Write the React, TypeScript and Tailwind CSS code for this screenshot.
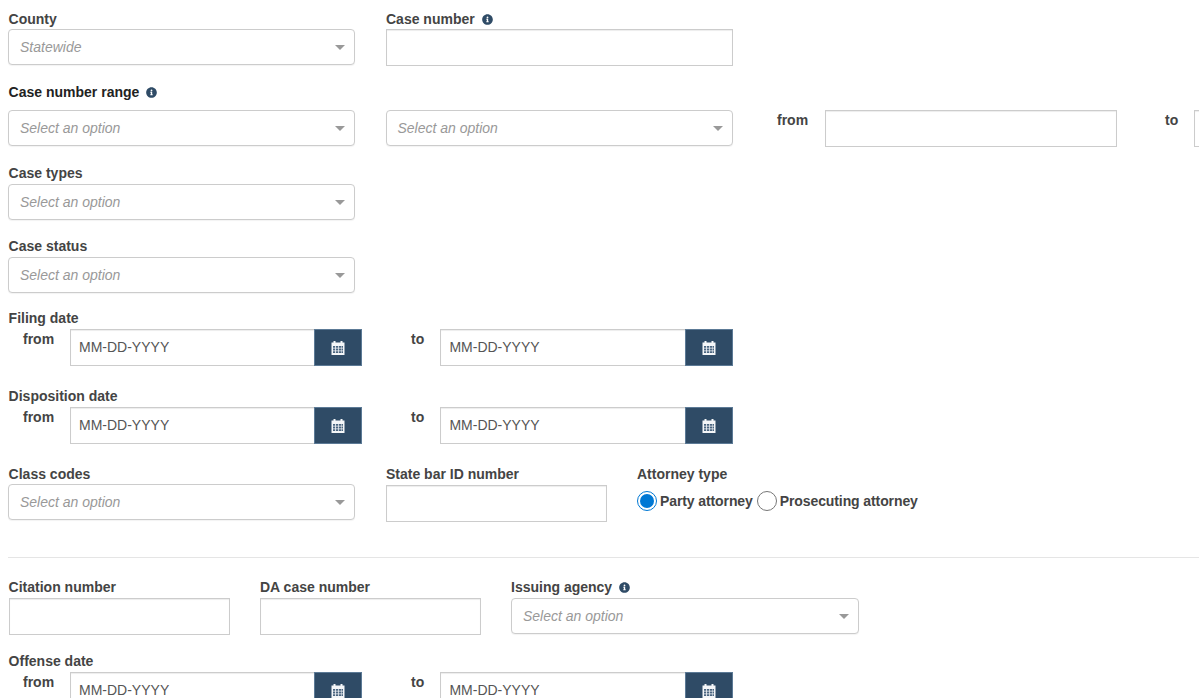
import React from 'react';
import { FaInfoCircle } from 'react-icons/fa';

function Label({ text, info, dark, first }: { text: string, info?: boolean, dark?: boolean, first?: boolean }): React.ReactElement {
  return (
    <div className={`flex items-center h-5 text-sm font-bold leading-5 ${first ? 'pl-[0.6px]' : ''} ${dark ? 'text-[#222]' : 'text-[#444]'}`}>
      {text}
      {info && <FaInfoCircle className="ml-[7px] w-[11px] h-[11px] text-[#2f4b66]" />}
    </div>
  )
}

function Select({ text = 'Select an option', className = 'w-[347px]' }: { text?: string, className?: string }): React.ReactElement {
  return (
    <div className={`relative shrink-0 flex items-center h-9 pl-[11px] pb-px bg-white border border-[#ccc] rounded shadow-[0_1px_1px_rgba(0,0,0,0.05)] text-sm italic text-[#999] ${className}`}>
      {text}
      <span className="absolute right-[9px] top-[15px] w-0 h-0 border-x-[5px] border-x-transparent border-t-[5px] border-t-[#999]" />
    </div>
  )
}

function TextInput({ className }: { className: string }): React.ReactElement {
  return <input className={`block shrink-0 h-[37px] bg-white border border-[#ccc] shadow-[inset_0_1px_1px_rgba(0,0,0,0.075)] ${className}`} />
}

function CalendarIcon(): React.ReactElement {
  return (
    <svg width="14" height="15" viewBox="0 0 14 15">
      <path fill="#f4f6f8" d="M0.500 2.500h2V1h2v1.500h5V1h2v1.500h2V15H0.500z" />
      <path fill="#4a6580" d="M2 6h2.200v1.800H2zM5 6h2.200v1.800H5zM7.900 6h2.200v1.800H7.900zM10.600 6H12v1.800h-1.400zM2 8.600h2.200v1.800H2zM5 8.600h2.200v1.800H5zM7.900 8.600h2.200v1.800H7.900zM10.600 8.600H12v1.800h-1.400zM2 11.200h2.200V13H2zM5 11.200h2.200V13H5zM7.900 11.200h2.200V13H7.900zM10.600 11.200H12V13h-1.400z" />
    </svg>
  )
}

function DateInput(): React.ReactElement {
  return (
    <div className="flex w-[292.4px] h-[37px]">
      <input
        placeholder="MM-DD-YYYY"
        className="flex-1 min-w-0 h-full pl-2 pb-px bg-white border border-[#ccc] border-r-0 shadow-[inset_0_1px_1px_rgba(0,0,0,0.075)] text-sm font-normal text-[#555] placeholder:text-[#555]"
      />
      <div className="flex items-center justify-center w-12 h-full bg-[#2f4b66] border border-[#5c7a96]">
        <CalendarIcon />
      </div>
    </div>
  )
}

function DateRange(): React.ReactElement {
  return (
    <div className="flex items-start text-sm font-bold text-[#444]">
      <div className="w-[62px] pl-[15px] leading-5">from</div>
      <DateInput />
      <div className="w-[78px] pl-[48.6px] leading-5">to</div>
      <DateInput />
    </div>
  )
}

function Radio({ text, checked }: { text: string, checked?: boolean }): React.ReactElement {
  return (
    <div className="flex items-center">
      {checked ? (
        <span className="flex items-center justify-center w-5 h-5 rounded-full border border-[#0078d4] bg-white">
          <span className="w-[14px] h-[14px] rounded-full bg-[#0078d4]" />
        </span>
      ) : (
        <span className="w-5 h-5 rounded-full border border-[#777] bg-white" />
      )}
      <span className="ml-[3px] text-sm font-bold tracking-[-0.1px] text-[#444]">{text}</span>
    </div>
  )
}

export default function App(): React.ReactElement {
  return (
    <div className="w-[1199px] h-[698px] overflow-hidden bg-white pl-2 pt-[9px] font-['Liberation_Sans',Arial,sans-serif]">
      <div className="flex gap-[31px]">
        <div>
          <Label text="County" first />
          <Select text="Statewide" />
        </div>
        <div>
          <Label text="Case number" info />
          <TextInput className="w-[347px]" />
        </div>
      </div>

      <div className="mt-4">
        <Label text="Case number range" info dark first />
        <div className="flex items-start mt-2">
          <Select />
          <Select className="w-[347.5px] ml-[30.5px]" />
          <div className="shrink-0 ml-[44px] w-12 text-sm font-bold leading-5 text-[#444]">from</div>
          <TextInput className="w-[292px]" />
          <div className="shrink-0 ml-[48px] w-[29px] text-sm font-bold leading-5 text-[#444]">to</div>
          <TextInput className="w-[292px]" />
        </div>
      </div>

      <div className="mt-4">
        <Label text="Case types" first />
        <div className="mt-px"><Select /></div>
      </div>

      <div className="mt-4">
        <Label text="Case status" first />
        <div className="mt-px"><Select /></div>
      </div>

      <div className="mt-[15px]">
        <Label text="Filing date" first />
        <div className="mt-px"><DateRange /></div>
      </div>

      <div className="mt-5">
        <Label text="Disposition date" first />
        <div className="mt-px"><DateRange /></div>
      </div>

      <div className="flex mt-5">
        <div>
          <Label text="Class codes" first />
          <Select />
        </div>
        <div className="ml-[31px]">
          <Label text="State bar ID number" />
          <TextInput className="w-[221px] mt-px" />
        </div>
        <div className="ml-[30px]">
          <Label text="Attorney type" />
          <div className="flex gap-1 mt-[7px]">
            <Radio text="Party attorney" checked />
            <Radio text="Prosecuting attorney" />
          </div>
        </div>
      </div>

      <hr className="mt-[35px] border-t border-[#e5e5e5]" />

      <div className="flex mt-[19px]">
        <div>
          <Label text="Citation number" first />
          <TextInput className="w-[221px] ml-px mt-px" />
        </div>
        <div className="ml-[30px]">
          <Label text="DA case number" />
          <TextInput className="w-[221px] mt-px" />
        </div>
        <div className="ml-[30px]">
          <Label text="Issuing agency" info />
          <div className="mt-px"><Select className="w-[348px]" /></div>
        </div>
      </div>

      <div className="mt-4">
        <Label text="Offense date" first />
        <div className="mt-px"><DateRange /></div>
      </div>
    </div>
  )
}
